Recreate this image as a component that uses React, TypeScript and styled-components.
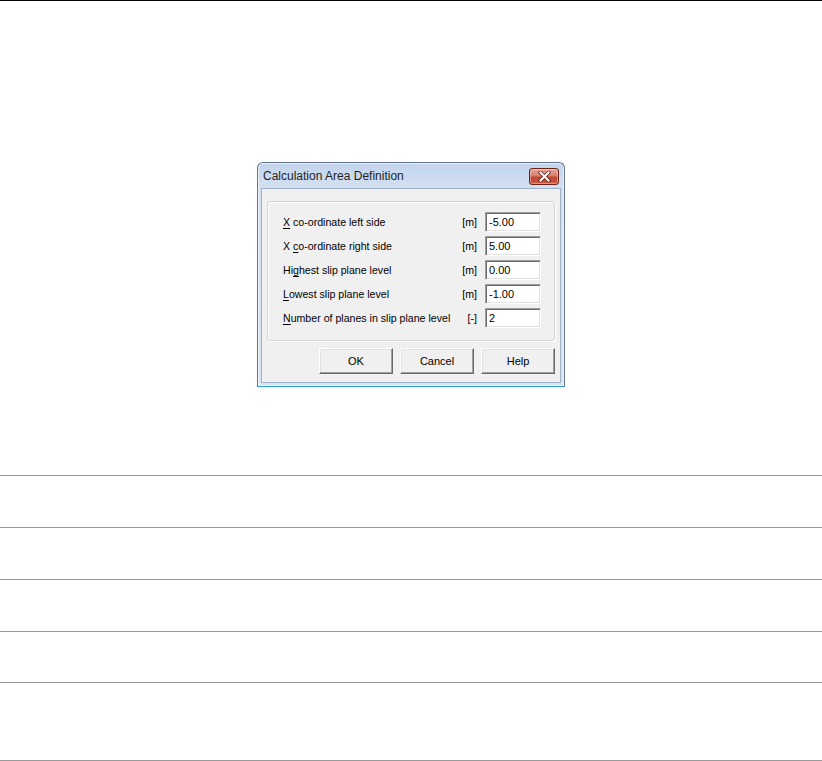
import React from "react";
import styled, { createGlobalStyle } from "styled-components";

const Global = createGlobalStyle`
  html, body { margin: 0; padding: 0; background: #ffffff; }
  body { font-family: "Liberation Sans", Arial, sans-serif; }
  * { box-sizing: border-box; }
`;

const Page = styled.div`
  width: 822px;
  display: flex;
  flex-direction: column;
`;

const TopRule = styled.div`
  height: 1px;
  background: #000;
`;

const Figure = styled.div`
  height: 474px;
  display: flex;
  justify-content: center;
  align-items: flex-start;
  padding-top: 161px;
`;

const TableRow = styled.div<{ $h: number; $last?: boolean }>`
  height: ${(p) => p.$h}px;
  border-top: 1px solid #999999;
  ${(p) => (p.$last ? "border-bottom: 1px solid #999999;" : "")}
`;

const Window = styled.div`
  width: 308px;
  border: 1px solid #64748a;
  border-bottom-color: #2a9fd0;
  border-radius: 6px 6px 0 0;
  background: linear-gradient(180deg, #c2d4ec 0px, #d3e0f1 25px, #d8e4f2 100%);
  padding: 0 3px 3px 3px;
  display: flex;
  flex-direction: column;
  box-shadow: inset 0 0 0 1px rgba(255, 255, 255, 0.6);
`;

const TitleBar = styled.div`
  height: 25px;
  display: flex;
  align-items: center;
  justify-content: space-between;
  padding-left: 2px;
  padding-right: 2px;
`;

const Title = styled.span`
  font-family: "Liberation Sans", Arial, sans-serif;
  font-size: 12px;
  color: #1e1e1e;
  margin-top: 1px;
`;

const CloseButton = styled.div`
  width: 30px;
  height: 17px;
  margin-top: 2px;
  border: 1px solid #6b2217;
  border-radius: 3px;
  background: linear-gradient(180deg, #e6a597 0%, #d7806f 45%, #c0452f 55%, #c85a44 100%);
  display: flex;
  align-items: center;
  justify-content: center;
  box-shadow: inset 0 0 0 1px rgba(255, 220, 210, 0.45);
`;

const Client = styled.div`
  border: 1px solid #9fb2c8;
  background: #f0f0f0;
  padding: 12px 5px 8px 5px;
  display: flex;
  flex-direction: column;
  gap: 7px;
`;

const Group = styled.div`
  border: 1px solid #d5d5d5;
  border-radius: 3px;
  box-shadow: inset 1px 1px 0 #ffffff, 1px 1px 0 #ffffff;
  padding: 10px 13px 12px 15px;
  display: flex;
  flex-direction: column;
  gap: 4px;
`;

const Row = styled.div`
  display: grid;
  grid-template-columns: 1fr auto 56px;
  align-items: center;
  column-gap: 8px;
  height: 20px;
`;

const Label = styled.span`
  font-size: 10.6px;
  color: #000;
  white-space: nowrap;
`;

const Key = styled.span`
  text-decoration: underline;
  text-underline-offset: 2px;
`;

const Unit = styled.span`
  font-size: 10.6px;
  color: #000;
  text-align: right;
`;

const Field = styled.div`
  height: 20px;
  background: #fff;
  border-top: 1px solid #a0a0a0;
  border-left: 1px solid #a0a0a0;
  border-right: 1px solid #ffffff;
  border-bottom: 1px solid #ffffff;
  box-shadow: inset 1px 1px 0 #696969, inset -1px -1px 0 #e3e3e3;
  font-size: 11px;
  color: #000;
  padding: 2px 0 0 3px;
  line-height: 14px;
`;

const Buttons = styled.div`
  display: flex;
  justify-content: flex-end;
  gap: 7px;
  padding-right: 0;
`;

const Button = styled.div`
  width: 74px;
  height: 26px;
  background: #f0f0f0;
  border-top: 1px solid #ffffff;
  border-left: 1px solid #ffffff;
  border-right: 1px solid #696969;
  border-bottom: 1px solid #696969;
  box-shadow: inset -1px -1px 0 #a0a0a0, inset 1px 1px 0 #e3e3e3;
  display: flex;
  align-items: center;
  justify-content: center;
  font-size: 11px;
  color: #000;
`;

const CloseGlyph = () => (
  <svg width="13" height="11" viewBox="0 0 13 11">
    <path d="M2.5 1.5 L10.5 9.5 M10.5 1.5 L2.5 9.5" stroke="#5a2018" strokeWidth="3.6" strokeLinecap="square" />
    <path d="M2.5 1.5 L10.5 9.5 M10.5 1.5 L2.5 9.5" stroke="#ffffff" strokeWidth="2" strokeLinecap="square" />
  </svg>
);

const rows: { label: React.ReactNode; unit: string; value: string }[] = [
  { label: <><Key>X</Key> co-ordinate left side</>, unit: "[m]", value: "-5.00" },
  { label: <>X <Key>c</Key>o-ordinate right side</>, unit: "[m]", value: "5.00" },
  { label: <>Hi<Key>g</Key>hest slip plane level</>, unit: "[m]", value: "0.00" },
  { label: <><Key>L</Key>owest slip plane level</>, unit: "[m]", value: "-1.00" },
  { label: <><Key>N</Key>umber of planes in slip plane level</>, unit: "[-]", value: "2" },
];

export default function App() {
  return (
    <Page>
      <Global />
      <TopRule />
      <Figure>
        <Window>
          <TitleBar>
            <Title>Calculation Area Definition</Title>
            <CloseButton>
              <CloseGlyph />
            </CloseButton>
          </TitleBar>
          <Client>
            <Group>
              {rows.map((r, i) => (
                <Row key={i}>
                  <Label>{r.label}</Label>
                  <Unit>{r.unit}</Unit>
                  <Field>{r.value}</Field>
                </Row>
              ))}
            </Group>
            <Buttons>
              <Button>OK</Button>
              <Button>Cancel</Button>
              <Button>Help</Button>
            </Buttons>
          </Client>
        </Window>
      </Figure>
      <TableRow $h={52} />
      <TableRow $h={52} />
      <TableRow $h={52} />
      <TableRow $h={51} />
      <TableRow $h={79} $last />
    </Page>
  );
}
